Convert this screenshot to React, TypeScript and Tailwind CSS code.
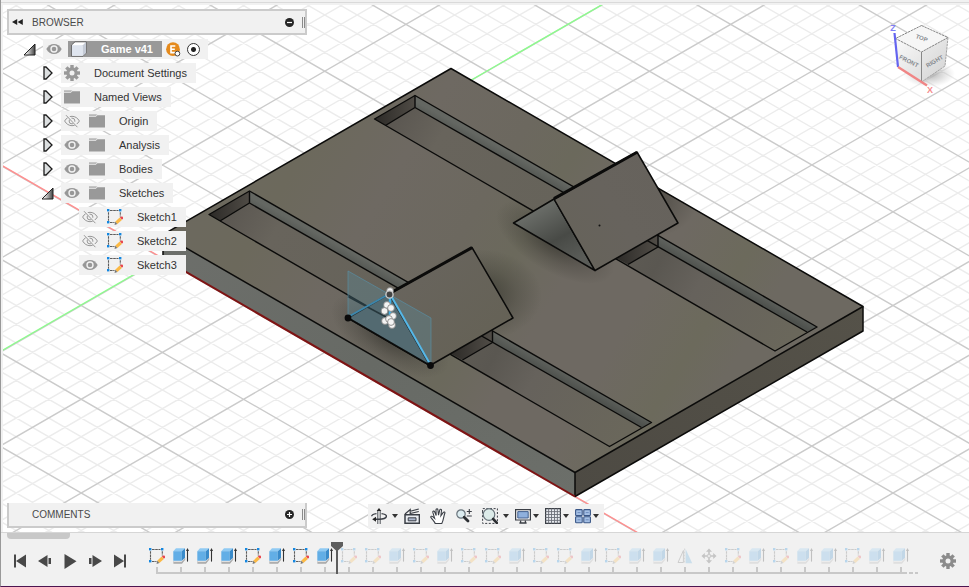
import type { ReactNode } from "react";

const SLOPE = 0.5773;
const MAJOR = 162.36;

/* ---------- small icons ---------- */

function Gear({ color, size = 16 }: { color: string; size?: number }) {
  return (
    <svg width={size} height={size} viewBox="0 0 16 16" aria-hidden="true">
      {[0, 45, 90, 135].map((a) => (
        <rect key={a} x="6.3" y="0" width="3.4" height="16" fill={color} transform={`rotate(${a} 8 8)`} />
      ))}
      <circle cx="8" cy="8" r="5.7" fill={color} />
      <circle cx="8" cy="8" r="2.5" fill="#f1f1f1" />
    </svg>
  );
}

function Eye() {
  return (
    <svg width="16" height="12" viewBox="0 0 16 12" aria-hidden="true">
      <path d="M0.3 6C2 2.7 4.8 0.9 8 0.9S14 2.7 15.7 6C14 9.3 11.2 11.1 8 11.1S2 9.3 0.3 6z" fill="#979797" />
      <circle cx="8" cy="6" r="3" fill="#979797" stroke="#f1f1f1" strokeWidth="1.4" />
    </svg>
  );
}

function EyeOff() {
  return (
    <svg width="16" height="14" viewBox="0 0 16 14" fill="none" stroke="#979797" aria-hidden="true">
      <path d="M0.6 7C2.3 4 5 2.3 8 2.3S13.7 4 15.4 7C13.7 10 11 11.7 8 11.7S2.3 10 0.6 7z" />
      <circle cx="8" cy="7" r="2.9" />
      <path d="M2.6 0.8L13.8 13" stroke="#f1f1f1" strokeWidth="2.4" />
      <path d="M2 1.2L13.4 13.2" />
    </svg>
  );
}

function Folder() {
  return (
    <svg width="16" height="14" viewBox="0 0 16 14" aria-hidden="true">
      <path d="M0 0.5h8l-1 1.2H0zM0 2.7h6.8l1.6-1.5H16V13.5H0z" fill="#999" />
      <path d="M0 2.2h6.8l1.4-1.5" stroke="#dcdcdc" strokeWidth="0.8" fill="none" />
    </svg>
  );
}

function SketchIcon() {
  return (
    <svg width="16" height="16" viewBox="0 0 16 16" aria-hidden="true">
      <g stroke="#5c5c5c" strokeWidth="1.1" fill="none">
        <path d="M3 1.5h8.5M1.5 3.2v8.6M13.3 3.2v4.3M3 13.5h4.5" strokeDasharray="2.6 0.6" />
      </g>
      <g fill="#1487e0">
        <rect x="0" y="0" width="2.4" height="2.4" />
        <rect x="12" y="0" width="2.4" height="2.4" />
        <rect x="0" y="12" width="2.4" height="2.4" />
      </g>
      <path d="M8.2 12.8L12.6 8.6L14.9 10.9L10.4 15z" fill="#fbb945" />
      <path d="M12.9 8.4l1.2-1 1.8 0.3 0.1 1.8-1 1.2z" fill="#e8434a" />
      <path d="M8.2 12.8L10.4 15L7.6 16z" fill="#777" />
    </svg>
  );
}

function ExtrudeIcon() {
  return (
    <svg width="16" height="16" viewBox="0 0 16 16" aria-hidden="true">
      <path d="M0.4 13.2h8.4l3.4-3.6v2.2L9 15.8H0.4z" fill="#a9a9a9" />
      <path d="M0.8 13.6h7.8l3-3" stroke="#eee" strokeWidth="0.8" fill="none" />
      <path d="M0.3 3.2L3 0.3H12L8.8 3.2z" fill="#8fcaf3" />
      <path d="M0.3 3.2H8.8V12.8H0.3z" fill="#62aee6" />
      <path d="M8.8 3.2L12 0.3V9.8L8.8 12.8z" fill="#3a8bca" />
      <path d="M14.5 1.5V13.6" stroke="#333" strokeWidth="1.1" />
      <path d="M14.5 0L16 3H13z" fill="#333" />
    </svg>
  );
}

function MirrorIcon() {
  return (
    <svg width="16" height="16" viewBox="0 0 16 16" aria-hidden="true">
      <path d="M6.4 2.5V14.5H1z" fill="none" stroke="#666" />
      <path d="M8.6 1V15.2H15.2z" fill="#5aa7dc" />
      <path d="M7.6 0.5v15" stroke="#777" strokeWidth="0.8" strokeDasharray="2 1" />
    </svg>
  );
}

function MoveIcon() {
  return (
    <svg width="16" height="16" viewBox="0 0 16 16" aria-hidden="true">
      <path d="M8 0.5l3 3.3H5zM8 15.5l3-3.3H5zM0.5 8l3.3-3v6zM15.5 8l-3.3-3v6z" fill="#444" />
      <path d="M8 3v3.4M8 9.6V13M3 8h3.4M9.6 8H13" stroke="#444" strokeWidth="1.6" />
      <rect x="6.7" y="6.7" width="2.6" height="2.6" fill="none" stroke="#444" strokeWidth="0.8" />
    </svg>
  );
}

function Caret() {
  return (
    <svg width="6" height="4" viewBox="0 0 6 4" aria-hidden="true">
      <path d="M0 0H6L3 4z" fill="#333" />
    </svg>
  );
}

/* ---------- model view ---------- */

function gridLines() {
  const major: string[] = [];
  const minor: string[] = [];
  for (let i = -60; i < 120; i++) {
    const x = 81.2 + (i * MAJOR) / 5;
    const target = i % 5 === 0 ? major : minor;
    target.push(`M${x - 1800} ${493 - 1800 * SLOPE}L${x + 1800} ${493 + 1800 * SLOPE}`);
    target.push(`M${x - 1800} ${493 + 1800 * SLOPE}L${x + 1800} ${493 - 1800 * SLOPE}`);
  }
  return { major: major.join(""), minor: minor.join("") };
}

const grid = gridLines();

const sketchPoints = [
  [390, 291],
  [387, 305],
  [391, 308],
  [384.5, 311],
  [393, 316],
  [385, 321],
  [389, 319],
  [392, 325],
  [391, 322],
];

function Slot({ dx = 0, dy = 0 }: { dx?: number; dy?: number }) {
  return (
    <g transform={`translate(${dx} ${dy})`}>
      <path d="M415 107.5L807 332L775 351L385.5 125.5z" fill="url(#floor)" />
      <path d="M415 95.5L817 327L807 332L415 107.5z" fill="url(#wall)" />
      <path d="M415 95.5V107.5L385.5 125.5L374.5 119z" fill="url(#endWall)" />
      <path d="M658 235V247L628 264.5L616 258z" fill="url(#endWall2)" />
      <g fill="none" stroke="#0b0b0a" strokeWidth="1.4" strokeLinejoin="round">
        <path d="M415 95.5L817 327L775 351L374.5 119z" />
        <path d="M415 95.5V107.5L807 332M415 107.5L385.5 125.5" />
        <path d="M658 235V247L628 264.5" />
      </g>
    </g>
  );
}

function ModelView() {
  return (
    <svg className="absolute inset-0 h-full w-full bg-white" role="img" aria-label="Game board model">
      <defs>
        <linearGradient id="top" gradientUnits="userSpaceOnUse" x1="163" y1="235" x2="640" y2="520">
          <stop offset="0" stopColor="#6c695f" />
          <stop offset="0.14" stopColor="#6c695c" />
          <stop offset="0.3" stopColor="#6e6962" />
          <stop offset="0.46" stopColor="#6c685f" />
          <stop offset="0.56" stopColor="#6b695c" />
          <stop offset="0.66" stopColor="#6e6962" />
          <stop offset="0.8" stopColor="#6e6962" />
          <stop offset="0.92" stopColor="#6c6a5c" />
          <stop offset="1" stopColor="#6d6961" />
        </linearGradient>
        <linearGradient id="front" x1="0" y1="0" x2="1" y2="1">
          <stop offset="0" stopColor="#6d6f6b" />
          <stop offset="0.5" stopColor="#676a65" />
          <stop offset="1" stopColor="#6c6f6a" />
        </linearGradient>
        <linearGradient id="side" x1="0" y1="1" x2="1" y2="0">
          <stop offset="0" stopColor="#4d4a43" />
          <stop offset="1" stopColor="#555249" />
        </linearGradient>
        <linearGradient id="floor" gradientUnits="userSpaceOnUse" x1="400" y1="116" x2="791" y2="340">
          <stop offset="0" stopColor="#5c5852" />
          <stop offset="0.1" stopColor="#68645c" />
          <stop offset="0.4" stopColor="#66635a" />
          <stop offset="0.66" stopColor="#5a5751" />
          <stop offset="0.76" stopColor="#66625c" />
          <stop offset="1" stopColor="#6a675b" />
        </linearGradient>
        <linearGradient id="wall" gradientUnits="userSpaceOnUse" x1="600" y1="202" x2="594" y2="213">
          <stop offset="0" stopColor="#646762" />
          <stop offset="1" stopColor="#4e514d" />
        </linearGradient>
        <linearGradient id="endWall" x1="0" y1="0" x2="1" y2="0">
          <stop offset="0" stopColor="#2c2a27" />
          <stop offset="1" stopColor="#4f4b45" />
        </linearGradient>
        <linearGradient id="endWall2" x1="0" y1="0" x2="1" y2="0">
          <stop offset="0" stopColor="#2c2a27" />
          <stop offset="1" stopColor="#514d47" />
        </linearGradient>
        <linearGradient id="prismFace" x1="0" y1="0.8" x2="1" y2="0.2">
          <stop offset="0" stopColor="#66635a" />
          <stop offset="0.5" stopColor="#67635d" />
          <stop offset="1" stopColor="#66625c" />
        </linearGradient>
        <linearGradient id="prismFaceNear" x1="0" y1="0" x2="1" y2="1">
          <stop offset="0" stopColor="#69655f" />
          <stop offset="1" stopColor="#646154" />
        </linearGradient>
        <linearGradient id="prismEnd" gradientUnits="userSpaceOnUse" x1="540" y1="200" x2="575" y2="262">
          <stop offset="0" stopColor="#70736e" />
          <stop offset="0.6" stopColor="#484a46" />
          <stop offset="1" stopColor="#5a5c58" />
        </linearGradient>
        <radialGradient id="shade">
          <stop offset="0" stopColor="#24231e" stopOpacity="0.6" />
          <stop offset="0.6" stopColor="#24231e" stopOpacity="0.2" />
          <stop offset="1" stopColor="#24231e" stopOpacity="0" />
        </radialGradient>
        <clipPath id="plate">
          <path d="M451 68.5L863 306.5L575 472.5L163 234.7z" />
        </clipPath>
      </defs>
      <g transform="translate(-3 -5)">
        <path d={grid.minor} stroke="#ececec" strokeWidth="1.4" fill="none" />
        <path d={grid.major} stroke="#cbcbcb" strokeWidth="1.4" fill="none" />
        <path d="M-237 27.5L1175 843" stroke="#ff8f8f" strokeWidth="1.4" />
        <path d="M-200 467L1200 -340" stroke="#8dfb8d" strokeWidth="1.4" />

        <path d="M451 68.5L863 306.5L575 472.5L163 234.7z" fill="url(#top)" />
        <path d="M163 234.7L575 472.5V496.5L163 258.7z" fill="url(#front)" />
        <path d="M863 306.5V331L575 496.5V472.5z" fill="url(#side)" />

        <g clipPath="url(#plate)">
          <ellipse cx="480" cy="295" rx="62" ry="46" fill="url(#shade)" />
          <ellipse cx="390" cy="336" rx="66" ry="30" fill="url(#shade)" transform="rotate(30 390 336)" />
          <ellipse cx="640" cy="200" rx="58" ry="40" fill="url(#shade)" />
          <ellipse cx="555" cy="242" rx="66" ry="30" fill="url(#shade)" transform="rotate(30 555 242)" />
        </g>

        <Slot />
        <Slot dx={-165.5} dy={95.5} />

        <g fill="none" stroke="#0b0b0a" strokeWidth="1.5" strokeLinejoin="round">
          <path d="M451 68.5L863 306.5L575 472.5L163 234.7z" />
          <path d="M863 306.5V331L575 496.5V472.5M163 234.7V258.7" />
        </g>
        <path d="M163 258.7L575 496.5" stroke="#7d1414" strokeWidth="2" />

        <g stroke="#0b0b0a" strokeWidth="1.5" strokeLinejoin="round">
          <path d="M554 199L595 270.5L513.5 223z" fill="url(#prismEnd)" />
          <path d="M554 199L637 152L678 223L595 270.5z" fill="url(#prismFace)" />
          <path d="M554 198.6L637 152.2" strokeWidth="3" />
          <path d="M389 294L430 365.5L348 318z" fill="#50585a" />
          <path d="M389 294L472 247.5L513 318L430 365.5z" fill="url(#prismFaceNear)" />
          <path d="M389 293.8L472 247.6" strokeWidth="3" />
          <path d="M348 296.5L386 317" fill="none" />
        </g>
        <circle cx="599.5" cy="225.5" r="1" fill="#111" />

        <path d="M348 271L431 318V365.5L348 318z" fill="#5b8c9f" fillOpacity="0.34" stroke="#5793ab" strokeOpacity="0.6" />
        <path d="M348 318L430 365.5" stroke="#0b0b0a" strokeWidth="1.6" />
        <path d="M348 317L389 294" stroke="#3d87ad" strokeWidth="2" />
        <path d="M390 294L430 364" stroke="#55b7e8" strokeWidth="2" />
        <path d="M390 296V322" stroke="#3fb0e6" strokeWidth="2.4" />
        {sketchPoints.map(([cx, cy]) => (
          <circle key={`${cx}-${cy}`} cx={cx} cy={cy} r="3.4" fill="#f4f4f4" stroke="#7c7c7c" strokeWidth="0.8" />
        ))}
        <circle cx="389.5" cy="294.5" r="3.6" fill="#444" stroke="#c9c9c9" strokeWidth="1.4" />
        <circle cx="348" cy="318" r="3.4" fill="#0a0a0a" />
        <circle cx="430.5" cy="365.5" r="3.4" fill="#0a0a0a" />
      </g>
    </svg>
  );
}

function ViewCube() {
  return (
    <svg width="72" height="86" viewBox="884 14 72 86" role="img" aria-label="View cube" className="mr-[9px] mt-[5px] shrink-0">
      <defs>
        <radialGradient id="cubeShade">
          <stop offset="0" stopColor="#777" stopOpacity="0.6" />
          <stop offset="1" stopColor="#999" stopOpacity="0" />
        </radialGradient>
        <linearGradient id="cubeFront" x1="0" y1="0" x2="0.6" y2="1">
          <stop offset="0" stopColor="#fafafa" />
          <stop offset="1" stopColor="#e2e2e2" />
        </linearGradient>
        <linearGradient id="cubeRight" x1="0" y1="0" x2="0.6" y2="1">
          <stop offset="0" stopColor="#ededed" />
          <stop offset="1" stopColor="#d6d6d6" />
        </linearGradient>
      </defs>
      <ellipse cx="929" cy="74" rx="26" ry="13" fill="url(#cubeShade)" />
      <path d="M921.5 25.5L948 37.5L921.5 52L895.5 38.5z" fill="#f6f6f6" />
      <path d="M895.5 38.5L921.5 52V82L898 67z" fill="url(#cubeFront)" />
      <path d="M948 37.5L921.5 52V82L945 66z" fill="url(#cubeRight)" />
      <path d="M921.5 25.5L948 37.5L921.5 52L895.5 38.5z" fill="none" stroke="#777" strokeWidth="0.9" strokeDasharray="2.5 0.7" />
      <path d="M921.5 52V82" stroke="#888" />
      <path d="M948 37.5L945 66L921.5 82" stroke="#a5a5a5" fill="none" strokeDasharray="2.5 0.7" />
      <path d="M894.5 33L898 67" stroke="#6464f0" strokeWidth="2.2" />
      <path d="M898 67L927 85.5" stroke="#f08585" strokeWidth="2.4" />
      <g fontFamily="Liberation Sans, sans-serif" fontWeight="700" textAnchor="middle">
        <text x="893" y="30.5" fontSize="9" fill="#8080f5">Z</text>
        <text x="930" y="93" fontSize="9" fill="#f58c8c">X</text>
        <g fill="#868a90">
          <text x="908" y="63" fontSize="6" transform="rotate(27 908 63)">FRONT</text>
          <text x="935.5" y="63" fontSize="6" transform="rotate(-30 935.5 63)">RIGHT</text>
          <text x="921" y="40" fontSize="6" transform="rotate(20 921 40)">TOP</text>
        </g>
      </g>
    </svg>
  );
}

/* ---------- browser tree ---------- */

type Node = {
  label: string;
  icon: ReactNode;
  eye?: "on" | "off";
  open?: boolean;
  leaf?: boolean;
};

const nodes: Node[] = [
  { label: "Document Settings", icon: <Gear color="#999" /> },
  { label: "Named Views", icon: <Folder /> },
  { label: "Origin", icon: <Folder />, eye: "off" },
  { label: "Analysis", icon: <Folder />, eye: "on" },
  { label: "Bodies", icon: <Folder />, eye: "on" },
  { label: "Sketches", icon: <Folder />, eye: "on", open: true },
  { label: "Sketch1", icon: <SketchIcon />, eye: "off", leaf: true },
  { label: "Sketch2", icon: <SketchIcon />, eye: "off", leaf: true },
  { label: "Sketch3", icon: <SketchIcon />, eye: "on", leaf: true },
];

function Toggle({ open, label }: { open?: boolean; label: string }) {
  return (
    <button type="button" aria-label={`${open ? "Collapse" : "Expand"} ${label}`} className="flex h-5 w-[13px] shrink-0 items-center justify-center">
      {open ? (
        <svg width="13" height="13" viewBox="0 0 13 13" aria-hidden="true">
          <defs>
            <linearGradient id="tri">
              <stop offset="0.2" stopColor="#eee" />
              <stop offset="1" stopColor="#444" />
            </linearGradient>
          </defs>
          <path d="M1 12L12 1V12z" fill="url(#tri)" stroke="#222" />
        </svg>
      ) : (
        <svg width="10" height="14" viewBox="0 0 10 14" aria-hidden="true">
          <path d="M1 1H3L9 7L3 13H1z" fill="#dcdfe0" stroke="#1c1c1c" strokeWidth="1.3" />
        </svg>
      )}
    </button>
  );
}

function EyeButton({ state, label }: { state: "on" | "off"; label: string }) {
  return (
    <button type="button" aria-label={`${state === "on" ? "Hide" : "Show"} ${label}`} className="flex h-5 w-4 shrink-0 items-center">
      {state === "on" ? <Eye /> : <EyeOff />}
    </button>
  );
}

function Browser() {
  return (
    <section className="w-[300px]" aria-label="Browser">
      <header className="flex h-[26px] items-center border-2 border-[#cbcbcb] bg-[#f1f1f1] pl-[3px] text-[10px] text-[#4a4a4a]">
        <button type="button" aria-label="Collapse panel" className="mr-[9px]">
          <svg width="11" height="6" viewBox="0 0 11 6" aria-hidden="true">
            <path d="M5.2 0V6L0 3zM10.8 0V6L5.6 3z" fill="#222" />
          </svg>
        </button>
        <h2>BROWSER</h2>
        <PanelEnd kind="minus" />
      </header>
      <ul className="mt-1 flex flex-col gap-1 text-[11px] leading-5 text-[#333]">
        <li className="flex pl-4">
          <Toggle open label="Game v41" />
          <div className="ml-[7px] flex h-5 items-center bg-[#f1f1f1] pl-[3px] pr-2">
            <EyeButton state="on" label="Game v41" />
            <div className="ml-[6px] flex h-4 items-center bg-[#999] pl-[2px] pr-[9px] font-bold text-white">
              <svg width="18" height="16" viewBox="0 0 18 16" aria-hidden="true">
                <path d="M1.5 4L5 0.8H16.2V12L13 15.2H1.5z" fill="#fff" stroke="#555" strokeWidth="0.9" />
                <path d="M1.9 4.2H12.8V14.8H1.9z" fill="#dfe5ef" />
                <path d="M12.8 4.2L16 1V12L12.8 15z" fill="#c5cbd6" />
              </svg>
              <span className="ml-[13px] whitespace-nowrap">Game v41</span>
            </div>
            <svg className="ml-1" width="15" height="15" viewBox="0 0 15 15" role="img" aria-label="Editing">
              <circle cx="7" cy="7.2" r="6.9" fill="#e58a1c" />
              <path d="M9.3 4H5v6.6h4.3M5 7.2h3.8" stroke="#fff" strokeWidth="1.6" fill="none" />
              <circle cx="11.4" cy="11.6" r="2.4" fill="#fff" stroke="#444" />
            </svg>
            <input
              type="radio"
              defaultChecked
              name="active"
              aria-label="Activate component"
              className="ml-[6px] h-[13px] w-[13px] appearance-none rounded-full border border-[#333] bg-[radial-gradient(circle,#222_2px,#fff_3px)]"
            />
          </div>
        </li>
        {nodes.map((n) => (
          <li key={n.label} className={n.leaf ? "flex pl-[72px]" : "flex pl-[34px]"}>
            {!n.leaf && <Toggle open={n.open} label={n.label} />}
            <div className={n.leaf ? "flex h-5 items-center bg-[#f1f1f1] pl-[3px] pr-[9px]" : "ml-[7px] flex h-5 items-center bg-[#f1f1f1] pl-[3px] pr-[9px]"}>
              {n.eye && (
                <span className="mr-[9px] flex">
                  <EyeButton state={n.eye} label={n.label} />
                </span>
              )}
              {n.icon}
              <span className="ml-[14px] whitespace-nowrap">{n.label}</span>
            </div>
          </li>
        ))}
      </ul>
    </section>
  );
}

function PanelEnd({ kind }: { kind: "minus" | "plus" }) {
  return (
    <div className="ml-auto flex items-center gap-2">
      <button type="button" aria-label={kind === "minus" ? "Collapse all" : "Add comment"}>
        <svg width="9" height="9" viewBox="0 0 9 9" aria-hidden="true">
          <circle cx="4.5" cy="4.5" r="4.5" fill="#262626" />
          <path d={kind === "minus" ? "M2 4.5h5" : "M2 4.5h5M4.5 2v5"} stroke="#fff" strokeWidth="1.2" />
        </svg>
      </button>
      <div className="h-[11px] w-[3px] border-x border-[#8a8a8a]" />
    </div>
  );
}

/* ---------- navigation bar ---------- */

function NavButton({ label, children, caret, className = "gap-[2px]" }: { label: string; children: ReactNode; caret?: boolean; className?: string }) {
  return (
    <button type="button" aria-label={label} aria-haspopup={caret ? "menu" : undefined} className={`flex items-center ${className}`}>
      <svg width="16" height="16" viewBox="0 0 16 16" fill="none" stroke="#3b3f46" aria-hidden="true">
        {children}
      </svg>
      {caret && <Caret />}
    </button>
  );
}

function NavBar() {
  return (
    <div role="toolbar" aria-label="Navigation" className="flex h-6 items-center gap-[6px] bg-[#f1f1f1] pl-[3px] pr-[5px]">
      <NavButton label="Orbit" caret className="gap-[5px]">
        <path d="M6.8 2.5V16M9.2 2.5V16" strokeWidth="0.9" />
        <path d="M8 0L10.3 3H5.7z" fill="#222" stroke="none" />
        <path d="M5.5 5.6C2.5 6 0.7 7 0.7 8.2M10.5 5.6C13.5 6 15.4 7 15.4 8.3C15.4 10 12 11.3 8 11.3H4" strokeWidth="1.4" />
        <path d="M1.2 11.3L5 8.8V13.8z" fill="#222" stroke="none" />
      </NavButton>
      <NavButton label="Look at">
        <path d="M1 6.8H15.4V15.3H1z" strokeWidth="1.5" fill="#e9ecf1" />
        <path d="M4.2 9.8H12v3H4.2z" fill="#aab6cc" />
        <path d="M1 6L6.2 1.5V3.3L14.8 1M6.2 3.3V5.5L14.8 3.5" strokeWidth="1.2" />
      </NavButton>
      <NavButton label="Pan" className="ml-1">
        <path
          d="M5.2 15.5C4.5 13.3 2.2 11.6 0.8 9.3C0.5 8.3 1.8 7.8 2.7 8.7L4.6 10.4L2.8 4.2C2.6 3 4.2 2.6 4.6 3.8L6.2 7.6L6 1.8C6 0.5 7.8 0.5 7.9 1.8L8.5 7.2L9.8 1.9C10.1 0.8 11.7 1.1 11.5 2.3L10.9 7.8L13.3 4.4C14 3.5 15.3 4.2 14.8 5.3C13.7 8 13.6 12.3 11.8 15.5z"
          fill="#fff"
          strokeWidth="1.1"
        />
      </NavButton>
      <NavButton label="Zoom" className="ml-1">
        <circle cx="5" cy="6" r="4.2" fill="#dcecf0" stroke="#69747c" strokeWidth="1.2" />
        <path d="M8.2 9.2L12 13" stroke="#2c2f33" strokeWidth="2.8" strokeLinecap="round" />
        <path d="M13.3 1v5M10.8 3.5h5M10.8 8h5" strokeWidth="1.1" />
      </NavButton>
      <NavButton label="Fit" caret className="ml-1 gap-[5px]">
        <path d="M0.6 4V0.6H15.4V15.4H0.6z" strokeDasharray="2 1.6" />
        <circle cx="7" cy="6.5" r="5.8" fill="#dcebe9" stroke="#69747c" strokeWidth="1.2" />
        <path d="M11.2 11L14.8 14.8" stroke="#2c2f33" strokeWidth="2.6" strokeLinecap="round" />
      </NavButton>
      <NavButton label="Display settings" caret>
        <path d="M0.6 1.6H15.4V12H0.6z" fill="#f6f6f6" strokeWidth="1.2" />
        <path d="M2.8 3.6H13.2V10H2.8z" fill="#8fb0dd" stroke="#45618f" />
        <path d="M5.6 12.5V14.6M10.4 12.5V14.6M4.4 15H11.6" strokeWidth="1.3" />
      </NavButton>
      <NavButton label="Grid and snaps" caret>
        <path d="M0.6 0.6H15.4V15.4H0.6z" fill="#e8ebf0" strokeWidth="1.2" />
        <path d="M3.6 0.5v15M6.5 0.5v15M9.5 0.5v15M12.4 0.5v15M0.5 3.6h15M0.5 6.5h15M0.5 9.5h15M0.5 12.4h15" stroke="#6b6f78" strokeWidth="0.9" />
      </NavButton>
      <NavButton label="Viewports" caret>
        <g fill="#a5bfe4" stroke="#3a5788" strokeWidth="1.1">
          <rect x="0.6" y="1.6" width="6.6" height="6" rx="0.8" />
          <rect x="8.8" y="1.6" width="6.6" height="6" rx="0.8" />
          <rect x="0.6" y="8.8" width="6.6" height="6" rx="0.8" />
          <rect x="8.8" y="8.8" width="6.6" height="6" rx="0.8" />
        </g>
        <path d="M2.5 4.6h3M10.7 4.6h3M2.5 11.8h3M10.7 11.8h3" stroke="#6d8cbd" />
      </NavButton>
    </div>
  );
}

/* ---------- timeline ---------- */

const features = "SEEESESESSESESSESSESEEMVSESEESEE".split("");
const MARKER = 8;

const featureKinds: Record<string, { label: string; icon: ReactNode }> = {
  S: { label: "Sketch", icon: <SketchIcon /> },
  E: { label: "Extrude", icon: <ExtrudeIcon /> },
  M: { label: "Mirror", icon: <MirrorIcon /> },
  V: { label: "Move", icon: <MoveIcon /> },
};

const playback = [
  { label: "Go to start", d: "M1 0.5H3V13.5H1zM13 0.5V13.5L3 7z" },
  { label: "Step back", d: "M9.5 1V13L0 7zM10.5 4H13V10H10.5z" },
  { label: "Play", d: "M1.5 0V15L13.5 7.2z" },
  { label: "Step forward", d: "M4.5 1V13L14 7zM1 4H3.5V10H1z" },
  { label: "Go to end", d: "M1 0.5V13.5L11 7zM11 0.5H13V13.5H11z" },
];

function Timeline() {
  return (
    <footer className="border-t border-[#d6d6d6] bg-[#f1f1f1] pb-[3px]">
      <div className="ml-[6px] h-[6px] w-[63px] rounded-b bg-[#c8c8c8]" />
      <div className="flex h-11 items-center pl-3 pr-[13px]">
        <div className="flex shrink-0 gap-[11px]">
          {playback.map((p) => (
            <button key={p.label} type="button" aria-label={p.label} className="w-[14px]">
              <svg width="14" height="15" viewBox="0 0 14 15" aria-hidden="true">
                <path d={p.d} fill="#484848" />
              </svg>
            </button>
          ))}
        </div>
        <ol className="ml-[18px] flex shrink-0">
          {features.map((f, i) => (
            <li key={i} className="relative flex w-6 flex-col items-center">
              <button type="button" aria-label={`${featureKinds[f].label} ${i + 1}`} className={i < MARKER ? "h-4 w-4" : "h-4 w-4 opacity-25"}>
                {featureKinds[f].icon}
              </button>
              <div className="mt-[3px] h-[5px] w-[2px] bg-[#c8c8c8]" />
              <div className={i === 0 ? "h-[2px] w-[13px] self-end bg-[#c8c8c8]" : i === features.length - 1 ? "h-[2px] w-[18px] self-start bg-[#c8c8c8]" : "h-[2px] w-6 bg-[#c8c8c8]"} />
              {i === MARKER && (
                <button type="button" aria-label="History marker" className="absolute -left-[6px] -top-[6px]">
                  <svg width="12" height="32" viewBox="0 0 12 32" aria-hidden="true">
                    <path d="M0 0H12V4L7 8.5V32H5V8.5L0 4z" fill="#5e5e5e" />
                  </svg>
                </button>
              )}
            </li>
          ))}
          <li className="flex items-end gap-[2px]" aria-hidden="true">
            <span className="-ml-1 h-[2px] w-1 bg-[#c8c8c8]" />
            <span className="h-[2px] w-[3px] bg-[#c8c8c8]" />
          </li>
        </ol>
        <button type="button" aria-label="Timeline settings" className="ml-auto shrink-0">
          <Gear color="#8c8c8c" />
        </button>
      </div>
    </footer>
  );
}

export default function App() {
  return (
    <div className="flex h-screen flex-col overflow-hidden border-b border-l border-b-[#4d1450] border-l-[#999] bg-[#f1f1f1] font-['Liberation_Sans',Arial,sans-serif]">
      <div className="h-[5px] shrink-0 pt-[2px]">
        <div className="h-px bg-[#dadada]" />
      </div>
      <main className="relative ml-[2px] flex min-h-0 flex-1 flex-col justify-between overflow-hidden px-1 pb-1 pt-1">
        <ModelView />
        <div className="relative flex items-start justify-between">
          <Browser />
          <ViewCube />
        </div>
        <div className="relative grid grid-cols-[1fr_auto_1fr] items-center">
          <section aria-label="Comments" className="flex h-[25px] w-[300px] items-center border-2 border-t-0 border-[#cbcbcb] bg-[#f1f1f1] pl-[23px] text-[10px] text-[#4a4a4a]">
            <h2>COMMENTS</h2>
            <PanelEnd kind="plus" />
          </section>
          <NavBar />
        </div>
      </main>
      <Timeline />
    </div>
  );
}
